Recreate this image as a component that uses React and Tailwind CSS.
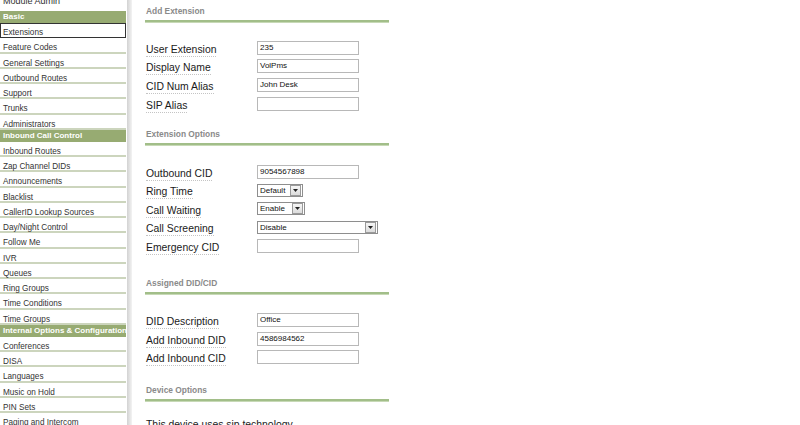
import React from "react";

const font = { fontFamily: '"Liberation Sans", Arial, sans-serif' };

const groups = [
  { title: "Basic", items: ["Extensions", "Feature Codes", "General Settings", "Outbound Routes", "Support", "Trunks", "Administrators"] },
  { title: "Inbound Call Control", items: ["Inbound Routes", "Zap Channel DIDs", "Announcements", "Blacklist", "CallerID Lookup Sources", "Day/Night Control", "Follow Me", "IVR", "Queues", "Ring Groups", "Time Conditions", "Time Groups"] },
  { title: "Internal Options & Configuration", items: ["Conferences", "DISA", "Languages", "Music on Hold", "PIN Sets", "Paging and Intercom"] },
];

function Arrow() {
  return (
    <div className="w-[11px] h-[11px] border border-[#9a9a9a] bg-gradient-to-b from-[#f6f6f6] to-[#dcdcdc] flex items-center justify-center mr-[1px]">
      <svg width="5" height="3" viewBox="0 0 5 3"><path d="M0 0H5L2.5 3Z" fill="#222" /></svg>
    </div>
  );
}

function Label({ children }) {
  return (
    <div className="w-[111px] shrink-0">
      <span className="text-[10.4px] leading-[12px] text-[#1a1a1a] border-b border-dotted border-[#c4c4c4] pb-[1px]">{children}</span>
    </div>
  );
}

function InputRow({ label, value }) {
  return (
    <div className="flex items-center h-[18.6px] shrink-0">
      <Label>{label}</Label>
      <div className="w-[102px] h-[14px] border border-[#b8b8b8] bg-white text-[8px] leading-[12px] pl-[2px] text-[#111]">{value}</div>
    </div>
  );
}

function SelectRow({ label, value, width }) {
  return (
    <div className="flex items-center h-[18.6px] shrink-0">
      <Label>{label}</Label>
      <div className={`${width} h-[13px] border border-[#8e8e8e] bg-white flex items-center justify-between`}>
        <span className="text-[8px] leading-[11px] pl-[2px] text-[#111]">{value}</span>
        <Arrow />
      </div>
    </div>
  );
}

function Heading({ children, className }) {
  return (
    <div className={`shrink-0 ${className}`}>
      <div className="text-[8.4px] leading-[12px] font-bold text-[#8a8a8a] pl-[1px]">{children}</div>
      <div className="mt-[3px] w-[244px] h-[3px] bg-[#a2be89] border-b border-[#c7d9b6]" />
    </div>
  );
}

export default function App() {
  return (
    <div className="w-[800px] h-[425px] overflow-hidden bg-white flex items-start" style={font}>
      <div className="w-[126px] shrink-0 block">
        <div className="h-[11px] overflow-hidden">
          <div className="-mt-[4px] pl-[3px] text-[9px] leading-[10px] text-[#333]">Module Admin</div>
        </div>
        {groups.map((g) => (
          <div key={g.title}>
            <div className="h-[12px] bg-[#97ab72] text-white font-bold text-[8px] leading-[12px] pl-[3px] whitespace-nowrap">{g.title}</div>
            {g.items.map((it) => (
              <div
                key={it}
                className={
                  it === "Extensions"
                    ? "h-[15.25px] border border-[#333] bg-white text-[8.2px] leading-[13px] pt-[2px] pl-[2px] text-[#333] whitespace-nowrap"
                    : "h-[15.25px] border-b-2 border-[#ccd5bd] bg-white text-[8.2px] leading-[13px] pt-[3px] pl-[3px] text-[#333] whitespace-nowrap"
                }
              >
                {it}
              </div>
            ))}
          </div>
        ))}
      </div>
      <div className="w-[1px] shrink-0" />
      <div className="w-[5px] h-[425px] shrink-0 bg-gradient-to-r from-[#d2d2d2] to-[#f3f3f3]" />
      <div className="flex flex-col pl-[13px]">
        <Heading className="mt-[5px]">Add Extension</Heading>
        <div className="mt-[15.5px] pl-[1px] flex flex-col shrink-0">
          <InputRow label="User Extension" value="235" />
          <InputRow label="Display Name" value="VolPms" />
          <InputRow label="CID Num Alias" value="John Desk" />
          <InputRow label="SIP Alias" value="" />
        </div>
        <Heading className="mt-[15.5px]">Extension Options</Heading>
        <div className="mt-[16px] pl-[1px] flex flex-col shrink-0">
          <InputRow label="Outbound CID" value="9054567898" />
          <SelectRow label="Ring Time" value="Default" width="w-[46px]" />
          <SelectRow label="Call Waiting" value="Enable" width="w-[48px]" />
          <SelectRow label="Call Screening" value="Disable" width="w-[121px]" />
          <InputRow label="Emergency CID" value="" />
        </div>
        <Heading className="mt-[21.5px]">Assigned DID/CID</Heading>
        <div className="mt-[16px] pl-[1px] flex flex-col shrink-0">
          <InputRow label="DID Description" value="Office" />
          <InputRow label="Add Inbound DID" value="4586984562" />
          <InputRow label="Add Inbound CID" value="" />
        </div>
        <Heading className="mt-[17px]">Device Options</Heading>
        <div className="mt-[17px] pl-[1px] text-[10.4px] leading-[12px] text-[#1a1a1a] whitespace-nowrap shrink-0">This device uses sip technology.</div>
      </div>
    </div>
  );
}
